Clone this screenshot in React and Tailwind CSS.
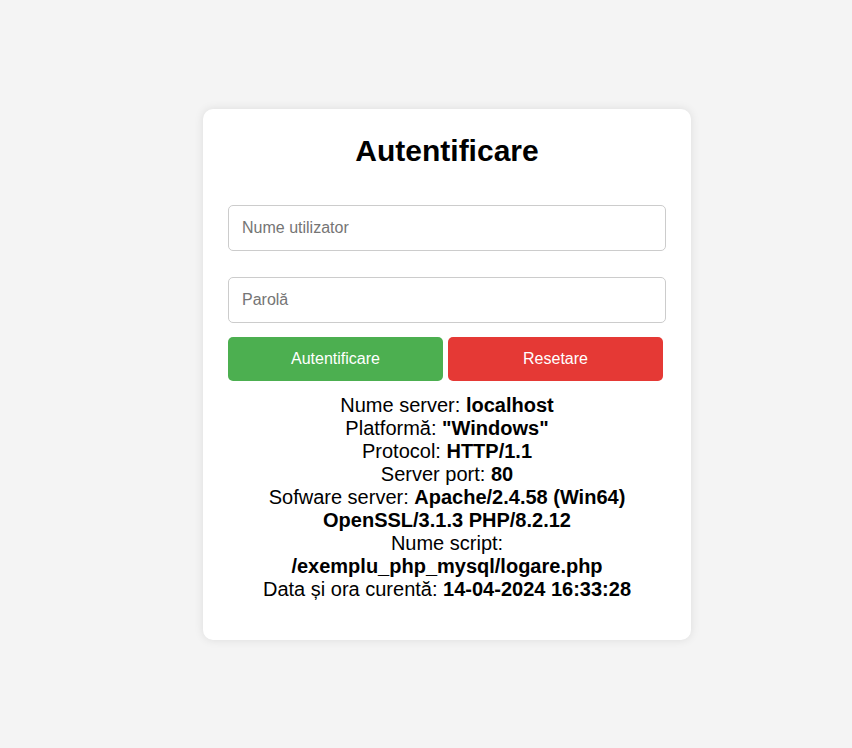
export default function App() {
  const info = [
    ['Nume server: ', 'localhost'],
    ['Platformă: ', '"Windows"'],
    ['Protocol: ', 'HTTP/1.1'],
    ['Server port: ', '80'],
    ['Sofware server: ', 'Apache/2.4.58 (Win64) OpenSSL/3.1.3 PHP/8.2.12'],
    ['Nume script:', '/exemplu_php_mysql/logare.php', true],
    ['Data și ora curentă: ', '14-04-2024 16:33:28'],
  ]

  return (
    <div
      className="min-h-[748px] bg-[#f4f4f4] flex items-center justify-center pl-[42px]"
      style={{ fontFamily: '"Liberation Sans", Arial, sans-serif' }}
    >
      <div className="w-[488px] bg-white rounded-[10px] shadow-[0_0_10px_rgba(0,0,0,0.1)] px-[25px] pt-[25px] pb-[39px]">
        <h2 className="text-center text-[30px] font-bold text-black leading-[34px]">Autentificare</h2>

        <input
          type="text"
          placeholder="Nume utilizator"
          className="mt-[37px] block w-full h-[46px] border border-[#ccc] rounded-[5px] px-[13px] text-[16px] placeholder:text-[#757575] outline-none"
        />
        <input
          type="password"
          placeholder="Parolă"
          className="mt-[26px] block w-full h-[46px] border border-[#ccc] rounded-[5px] px-[13px] text-[16px] placeholder:text-[#757575] outline-none"
        />

        <div className="mt-[14px] flex gap-[5px]">
          <button className="w-[215px] h-[44px] bg-[#4caf50] text-white text-[16px] rounded-[5px]">Autentificare</button>
          <button className="w-[215px] h-[44px] bg-[#e53935] text-white text-[16px] rounded-[5px]">Resetare</button>
        </div>

        <div className="mt-[13px] text-center text-[20px] leading-[23px] text-black">
          {info.map(([k, v, br]) => (
            <div key={k}>
              {k}
              {br ? <br /> : null}
              <b>{v}</b>
            </div>
          ))}
        </div>
      </div>
    </div>
  )
}
